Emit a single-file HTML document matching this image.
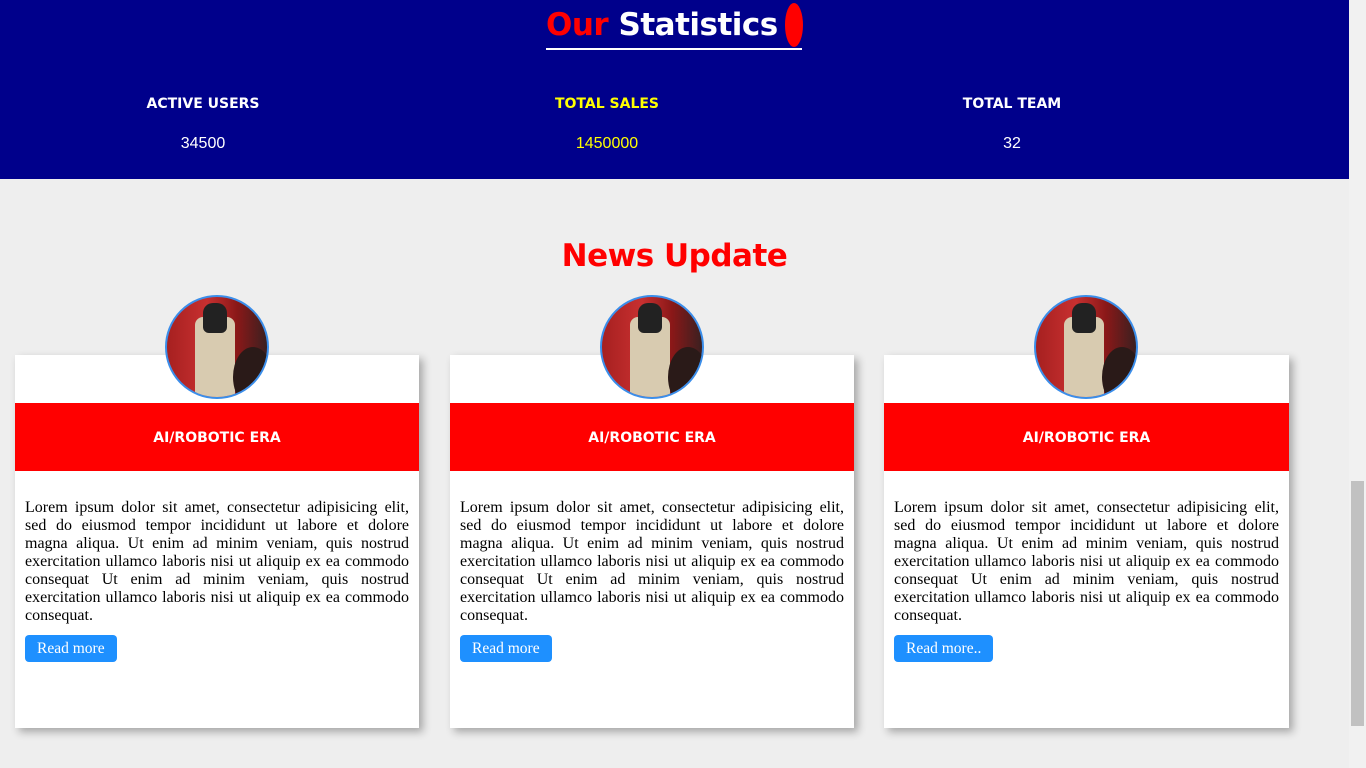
<!DOCTYPE html>
<html><head><style>
html,body{margin:0;padding:0}
body{width:1349px;height:768px;background:#eeeeee;overflow:hidden;position:relative;font-family:"Comic Sans MS","DejaVu Sans",sans-serif}
.scroll{position:absolute;left:1349px;top:0;width:17px;height:768px;background:#f1f1f1}
.thumb{position:absolute;left:1351px;top:481px;width:13px;height:245px;background:#c1c1c1}
.stats{position:absolute;left:0;top:0;width:1349px;height:179px;background:#00008b}
.title{position:absolute;left:546px;top:2px;width:256px;height:46px;border-bottom:2px solid #fff;font-size:31px;font-weight:bold;color:#fff;white-space:nowrap;line-height:46px;letter-spacing:-0.5px}
.title .r{color:#f00}
.oval{position:absolute;left:785px;top:3px;width:18px;height:44px;border-radius:50%;background:#f00}
.st{position:absolute;top:96px;width:260px;text-align:center;font-size:14px;font-weight:bold;color:#fff}
.sv{position:absolute;top:135px;width:260px;text-align:center;font:16px "Liberation Sans",sans-serif;color:#fff}
.y{color:#ff0}
h2{position:absolute;left:0;width:1349px;top:233px;margin:0;text-align:center;color:#f00;font-size:31px;font-weight:bold;line-height:46px;letter-spacing:-0.5px}
.card{position:absolute;top:355px;width:404px;height:373px;background:#fff;box-shadow:4px 4px 8px rgba(0,0,0,.3)}
.hd{position:absolute;top:48px;left:0;width:100%;height:68px;background:#f00;color:#fff;text-align:center;line-height:70px;font-size:14px;font-weight:bold}
.av{position:absolute;top:-60px;left:150px;width:100px;height:100px;border:2px solid #3b8eea;border-radius:50%;overflow:hidden;background:linear-gradient(90deg,#a62020,#c83030 40%,#8a1818 70%,#3a2020)}
.av .b{position:absolute;left:28px;top:20px;width:40px;height:80px;background:#d8cbb0;border-radius:8px 8px 0 0}
.av .h{position:absolute;left:36px;top:6px;width:24px;height:30px;background:#222;border-radius:10px 10px 6px 6px}
.av .m{position:absolute;left:66px;top:50px;width:40px;height:60px;background:#2a1a18;border-radius:50%}
.p{position:absolute;top:144px;left:10px;right:10px;font:16px/18px "Liberation Serif",serif;text-align:justify;color:#000;margin:0}
.btn{position:absolute;top:280px;left:10px;height:27px;padding:0 12px;background:#1e90ff;color:#fff;border-radius:4px;font:15.5px/28px "Liberation Serif",serif}
</style></head><body>
<div class="stats">
<div class="title"><span class="r">Our</span> Statistics</div>
<div class="oval"></div>
<div class="st" style="left:73px">ACTIVE USERS</div><div class="sv" style="left:73px">34500</div>
<div class="st y" style="left:477px">TOTAL SALES</div><div class="sv y" style="left:477px">1450000</div>
<div class="st" style="left:882px">TOTAL TEAM</div><div class="sv" style="left:882px">32</div>
</div>
<h2>News Update</h2>
<div class="card" style="left:15px"><div class="av"><div class="b"></div><div class="h"></div><div class="m"></div></div><div class="hd">AI/ROBOTIC ERA</div><p class="p">Lorem ipsum dolor sit amet, consectetur adipisicing elit, sed do eiusmod tempor incididunt ut labore et dolore magna aliqua. Ut enim ad minim veniam, quis nostrud exercitation ullamco laboris nisi ut aliquip ex ea commodo consequat Ut enim ad minim veniam, quis nostrud exercitation ullamco laboris nisi ut aliquip ex ea commodo consequat.</p><div class="btn">Read more</div></div>
<div class="card" style="left:450px"><div class="av"><div class="b"></div><div class="h"></div><div class="m"></div></div><div class="hd">AI/ROBOTIC ERA</div><p class="p">Lorem ipsum dolor sit amet, consectetur adipisicing elit, sed do eiusmod tempor incididunt ut labore et dolore magna aliqua. Ut enim ad minim veniam, quis nostrud exercitation ullamco laboris nisi ut aliquip ex ea commodo consequat Ut enim ad minim veniam, quis nostrud exercitation ullamco laboris nisi ut aliquip ex ea commodo consequat.</p><div class="btn">Read more</div></div>
<div class="card" style="left:884px;width:405px"><div class="av"><div class="b"></div><div class="h"></div><div class="m"></div></div><div class="hd">AI/ROBOTIC ERA</div><p class="p">Lorem ipsum dolor sit amet, consectetur adipisicing elit, sed do eiusmod tempor incididunt ut labore et dolore magna aliqua. Ut enim ad minim veniam, quis nostrud exercitation ullamco laboris nisi ut aliquip ex ea commodo consequat Ut enim ad minim veniam, quis nostrud exercitation ullamco laboris nisi ut aliquip ex ea commodo consequat.</p><div class="btn">Read more..</div></div>
<div class="scroll"></div><div class="thumb"></div>
</body></html>
